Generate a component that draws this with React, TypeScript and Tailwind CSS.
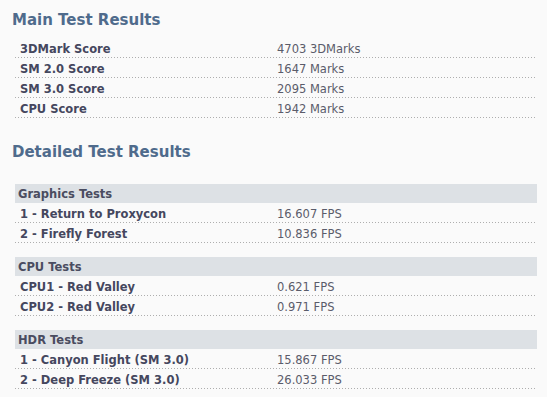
const mainResults = [
  ["3DMark Score", "4703 3DMarks"],
  ["SM 2.0 Score", "1647 Marks"],
  ["SM 3.0 Score", "2095 Marks"],
  ["CPU Score", "1942 Marks"],
];

const detailGroups = [
  {
    title: "Graphics Tests",
    rows: [
      ["1 - Return to Proxycon", "16.607 FPS"],
      ["2 - Firefly Forest", "10.836 FPS"],
    ],
  },
  {
    title: "CPU Tests",
    rows: [
      ["CPU1 - Red Valley", "0.621 FPS"],
      ["CPU2 - Red Valley", "0.971 FPS"],
    ],
  },
  {
    title: "HDR Tests",
    rows: [
      ["1 - Canyon Flight (SM 3.0)", "15.867 FPS"],
      ["2 - Deep Freeze (SM 3.0)", "26.033 FPS"],
    ],
  },
];

function ResultRow({ label, value }: { label: string; value: string }) {
  return (
    <div className="flex h-5 flex-col">
      <div className="flex flex-1 items-center pl-[5px] pt-[4px]">
        <span className="w-[257px] font-bold text-[#45475e]">{label}</span>
        <span className="text-[#5a5c6a]">{value}</span>
      </div>
      {/* dotted separator */}
      <div className="h-px bg-[linear-gradient(to_right,#aeaeae_1px,transparent_1px)] bg-[length:3px_1px]" />
    </div>
  );
}

export default function App() {
  return (
    <main
      className="min-h-[397px] w-[547px] bg-[#fafafa] pt-[10px] pl-3 text-[11.5px] leading-none"
      style={{ fontFamily: '"DejaVu Sans", Verdana, sans-serif' }}
    >
      {/* Main results */}
      <h2 className="text-[15px] font-bold leading-5 text-[#4f6b8c]">Main Test Results</h2>
      <div className="mt-[8px] ml-[3px] w-[521px]">
        {mainResults.map(([label, value]) => (
          <ResultRow key={label} label={label} value={value} />
        ))}
      </div>

      {/* Detailed results */}
      <h2 className="mt-[24px] text-[15px] font-bold leading-5 text-[#4f6b8c]">Detailed Test Results</h2>
      <div className="mt-[22px] ml-[3px] flex w-[522px] flex-col gap-[14px]">
        {detailGroups.map((group) => (
          <div key={group.title}>
            <div className="flex h-[19px] items-center bg-[#dde1e5] pl-[3px] pt-[2px] font-bold text-[#4a4c60]">
              {group.title}
            </div>
            {group.rows.map(([label, value]) => (
              <ResultRow key={label} label={label} value={value} />
            ))}
          </div>
        ))}
      </div>
    </main>
  );
}
